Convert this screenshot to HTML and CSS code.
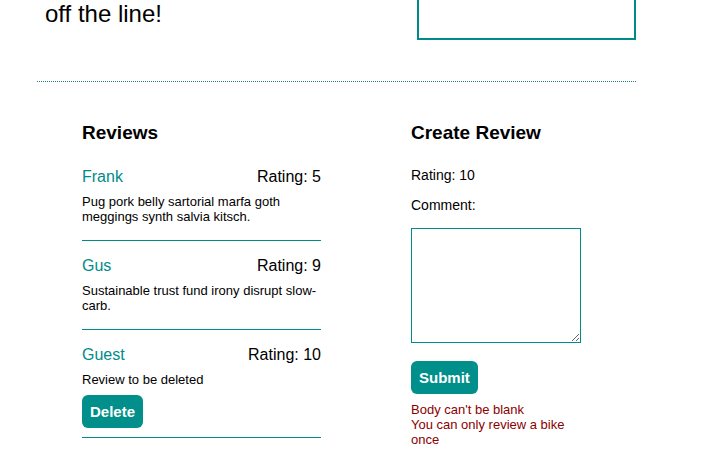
FILE: index.html
```html
<!DOCTYPE html>
<html lang="en">
<head>
<meta charset="utf-8">
<title>Bike Reviews</title>
<link rel="stylesheet" href="styles.css">
</head>
<body>
<div class="page">
  <section class="hero">
    <p class="hero-text">off the line!</p>
    <div class="hero-box"></div>
  </section>
  <hr class="divider">
  <main class="content">
    <section class="reviews">
      <h2 class="col-title">Reviews</h2>
      <article class="review">
        <div class="review-head">
          <span class="review-name">Frank</span>
          <span class="review-rating">Rating: 5</span>
        </div>
        <p class="review-body">Pug pork belly sartorial marfa goth meggings synth salvia kitsch.</p>
      </article>
      <article class="review">
        <div class="review-head">
          <span class="review-name">Gus</span>
          <span class="review-rating">Rating: 9</span>
        </div>
        <p class="review-body">Sustainable trust fund irony disrupt slow-carb.</p>
      </article>
      <article class="review review-own">
        <div class="review-head">
          <span class="review-name">Guest</span>
          <span class="review-rating">Rating: 10</span>
        </div>
        <p class="review-body">Review to be deleted</p>
        <button class="btn btn-delete" type="button">Delete</button>
      </article>
    </section>
    <section class="create">
      <h2 class="col-title">Create Review</h2>
      <p class="field-label">Rating: 10</p>
      <p class="field-label field-comment">Comment:</p>
      <textarea class="comment-box"></textarea>
      <button class="btn btn-submit" type="button">Submit</button>
      <ul class="errors">
        <li>Body can't be blank</li>
        <li>You can only review a bike once</li>
      </ul>
    </section>
  </main>
</div>
</body>
</html>
```
FILE: styles.css
```css
html, body {
  margin: 0;
  padding: 0;
  background: #ffffff;
}

body {
  font-family: "Liberation Sans", Arial, Helvetica, sans-serif;
  color: #000000;
  overflow: hidden;
}

.page {
  width: 599px;
  margin: -60px 0 0 37px;
}

.hero {
  display: flex;
  justify-content: space-between;
  align-items: flex-end;
}

.hero-text {
  margin: 0 0 12px 8px;
  font-size: 24px;
  line-height: 28px;
}

.hero-box {
  width: 215px;
  height: 96px;
  border: 2px solid #008b8b;
}

.divider {
  margin: 41px 0 0;
  border: 0;
  border-top: 1px dotted #2a7a7a;
  height: 0;
}

.content {
  display: flex;
  gap: 90px;
  padding: 40px 0 0 45px;
}

.reviews {
  width: 239px;
}

.create {
  width: 170px;
}

.col-title {
  margin: 0 0 8px;
  font-size: 19px;
  line-height: 22px;
  font-weight: bold;
}

.review {
  padding-top: 16px;
  border-bottom: 1px solid #008b8b;
}

.reviews .review:first-of-type {
  padding-top: 15.5px;
}

.review-head {
  display: flex;
  justify-content: space-between;
  align-items: baseline;
  font-size: 16px;
  line-height: 18px;
}

.review-name {
  color: #008b8b;
}

.review-body {
  margin: 8px 0 16px;
  font-size: 13px;
  line-height: 15px;
}

.review-own .review-body {
  margin-bottom: 8px;
}

.btn {
  display: block;
  border: 0;
  border-radius: 6px;
  background: #008f8a;
  color: #ffffff;
  font-family: "Liberation Sans", Arial, Helvetica, sans-serif;
  font-size: 15px;
  font-weight: bold;
  line-height: 17px;
  padding: 8px 8px;
  cursor: pointer;
}

.btn-delete {
  margin-bottom: 9px;
}

.field-label {
  margin: 0;
  font-size: 14px;
  line-height: 16px;
}

.create .col-title {
  margin-bottom: 23px;
}

.field-comment {
  margin-top: 14px;
}

.comment-box {
  display: block;
  box-sizing: border-box;
  width: 170px;
  height: 115px;
  margin: 15px 0 0;
  border: 1px solid #008b8b;
  padding: 2px;
  font-family: "Liberation Sans", Arial, sans-serif;
  font-size: 13px;
}

.btn-submit {
  margin-top: 18px;
}

.errors {
  list-style: none;
  margin: 8px 0 0;
  padding: 0;
  color: #8b0000;
  font-size: 13px;
  line-height: 15px;
}
```
